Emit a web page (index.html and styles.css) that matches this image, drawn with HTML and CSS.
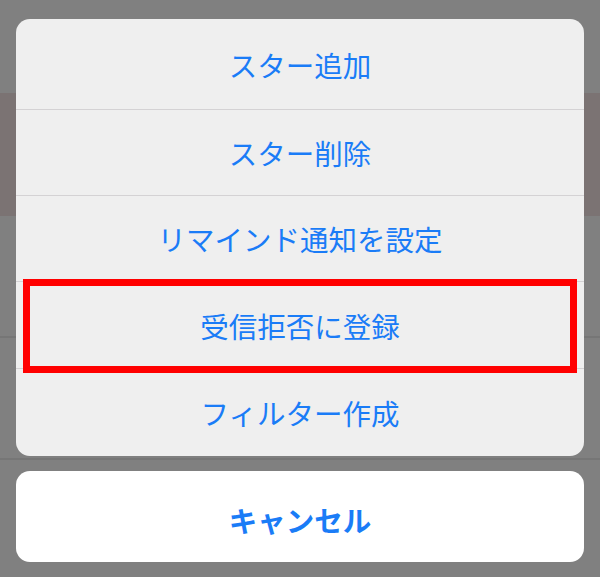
FILE: index.html
```html
<!DOCTYPE html>
<html lang="ja">
<head>
<meta charset="utf-8">
<title>アクションシート</title>
<link rel="stylesheet" href="styles.css">
</head>
<body>
<div class="screen">
  <div class="sheet">
    <div class="item item-first">スター追加</div>
    <div class="item">スター削除</div>
    <div class="item">リマインド通知を設定</div>
    <div class="item item-tall">受信拒否に登録</div>
    <div class="item item-last">フィルター作成</div>
  </div>
  <div class="cancel">キャンセル</div>
  <div class="highlight"></div>
</div>
</body>
</html>
```
FILE: styles.css
```css
html, body {
  margin: 0;
  padding: 0;
}

body {
  width: 600px;
  height: 577px;
  overflow: hidden;
  font-family: "Noto Sans CJK JP", "Noto Sans", sans-serif;
  background:
    linear-gradient(to bottom,
      #808080 0px, #808080 93px,
      #7b7373 93px, #7b7373 216px,
      #808080 216px, #808080 336px,
      #767676 336px, #767676 338px,
      #808080 338px, #808080 458px,
      #767676 458px, #767676 460px,
      #808080 460px);
}

.screen {
  position: relative;
  display: flex;
  flex-direction: column;
  gap: 15px;
  padding: 19px 16px 0 16px;
}

.sheet {
  display: flex;
  flex-direction: column;
  background: #efefef;
  border-radius: 14px;
  overflow: hidden;
}

.item {
  height: 85px;
  display: flex;
  align-items: center;
  justify-content: center;
  border-bottom: 1px solid #d4d2d4;
  color: #1a7cf7;
  font-size: 28.5px;
  font-weight: 400;
}

.item-first {
  height: 90px;
}

.item-tall {
  height: 86px;
}

.item-last {
  height: 87px;
  border-bottom: none;
}

.cancel {
  height: 91px;
  box-sizing: border-box;
  padding-top: 6px;
  display: flex;
  align-items: center;
  justify-content: center;
  background: #ffffff;
  border-radius: 14px;
  color: #1a7cf7;
  font-size: 28.5px;
  font-weight: 700;
}

.highlight {
  position: absolute;
  left: 23px;
  top: 279px;
  width: 554px;
  height: 94px;
  box-sizing: border-box;
  border: 7px solid #ff0000;
}
```
